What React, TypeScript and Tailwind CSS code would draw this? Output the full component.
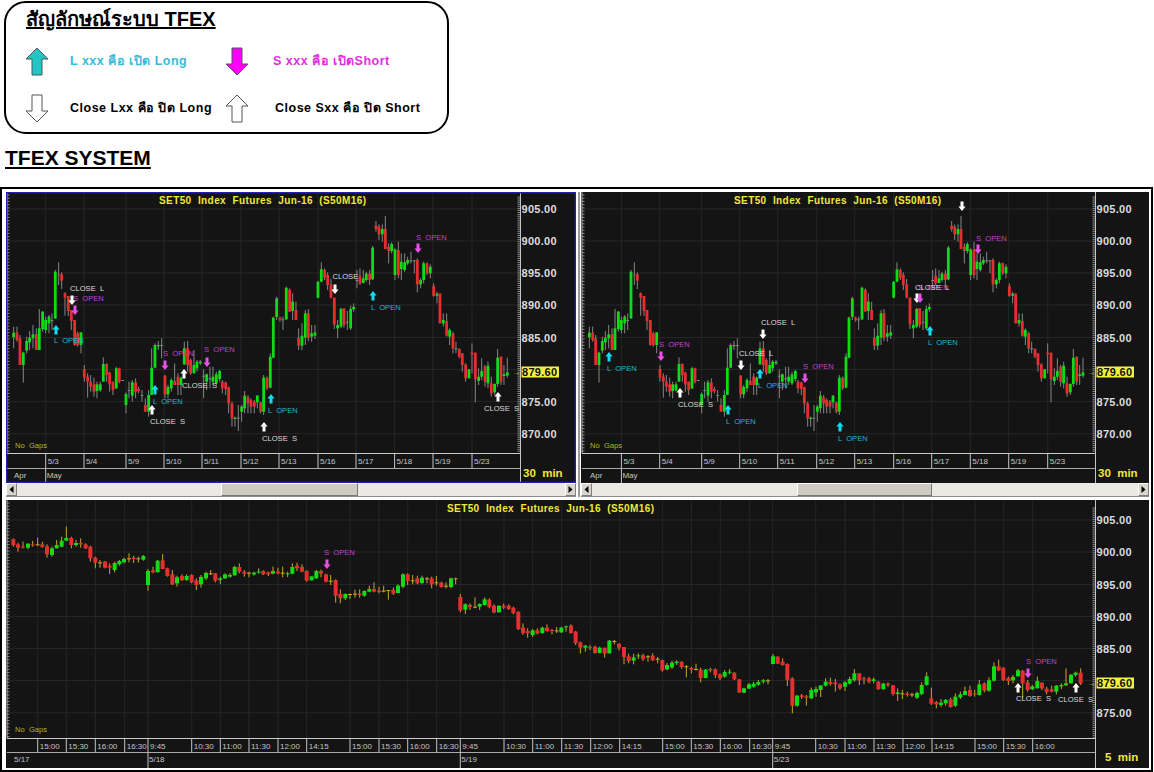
type Candle = { x: number; c: string; wt: number; bt: number; bb: number; wb: number };
type Mark = { x: number; y: number; dir: "up" | "down"; color: string };
type Note = { x: number; y: number; text: string; color: string };

// rows are "x colour wickTop bodyTop bodyBottom wickBottom", read off the picture at 3x
const parseRows = (src: string, x0: number, y0: number): Candle[] =>
  src
    .trim()
    .split(",")
    .map((r) => {
      const p = r.trim().split(" ");
      return {
        x: x0 + Number(p[0]) / 3,
        c: p[1],
        wt: y0 + Number(p[2]) / 3,
        bt: y0 + Number(p[3]) / 3,
        bb: y0 + Number(p[4]) / 3,
        wb: y0 + Number(p[5]) / 3,
      };
    });

const TOP_A = `28 g 425 443 457 490,38 r 425 443 465 470,47 r 450 460 540 540,57 g 500 503 540 593,67 g 455 468 497 505,
76 g 438 458 472 495,86 g 420 448 460 490,96 r 430 447 495 495,105 g 372 430 495 495,115 g 378 380 432 440,124 g 395 405 435 445,
134 g 390 395 415 445,143 n 385 405 408 435,153 g 255 260 400 402,163 r 232 268 271 300,172 r 262 268 287 312,182 r 322 325 338 392,
192 r 333 333 378 393,201 r 375 375 408 435,211 r 405 405 480 482,220 r 440 445 480 485,230 g 442 442 480 505,240 r 540 552 578 590,
250 r 565 575 590 638,259 r 570 590 605 620,269 r 578 598 620 635,278 g 590 598 618 640,288 g 590 598 616 620,297 g 517 537 590 590,
307 r 535 537 570 590,316 r 560 563 598 620,326 r 590 590 615 630,336 g 545 550 610 612,345 r 548 550 590 595,355 n 585 585 587 587,
365 g 622 627 660 685,374 n 590 615 618 640,384 g 585 592 632 650,394 r 580 592 620 640,403 r 605 612 618 625,413 n 615 630 633 650,
423 r 640 660 680 680,433 g 615 630 680 695,442 g 490 548 630 630,452 g 475 480 548 550,462 g 468 480 484 495,472 n 460 480 483 520,
482 r 570 572 628 640,491 g 600 606 628 640,501 g 580 585 610 620,511 r 535 588 600 600,521 r 565 575 600 630,530 g 575 578 600 630,
540 g 470 490 538 540,550 r 468 490 540 560,559 r 520 525 565 570,569 g 495 540 565 565,578 g 525 530 550 560,588 g 525 530 535 540,
598 n 553 572 575 640,607 g 565 568 590 615,617 n 545 580 583 610,626 g 545 575 590 600,636 g 560 568 595 600,646 g 555 558 582 590,
654 r 585 590 610 625,664 r 590 592 612 630,673 r 605 607 655 685,683 r 650 655 700 725,692 g 695 698 702 725,702 n 660 698 701 738,
712 g 660 665 680 710,721 g 618 632 670 685,731 r 630 637 655 685,740 r 640 645 665 685,750 r 645 650 665 685,759 g 630 632 652 670,
769 r 650 652 680 685,778 g 570 578 680 690,788 r 575 578 610 615,798 g 505 515 608 610,807 g 395 398 518 520,817 g 335 340 396 405,
827 r 395 398 404 410,836 n 395 403 406 435,846 g 305 308 403 405,856 r 310 314 380 380`;
const TOP_B = `10 g 325 350 378 405,20 r 350 375 405 405,28 r 430 458 482 495,38 g 415 452 482 495,48 g 375 385 458 480,57 r 372 385 458 468,
67 g 420 445 455 470,77 g 420 442 452 462,86 g 288 290 338 340,96 g 232 253 290 292,106 r 250 255 278 285,115 r 262 270 300 315,
125 r 282 298 338 340,135 r 338 338 418 432,145 g 405 420 430 460,155 g 368 372 425 430,164 r 370 370 420 428,174 n 378 410 413 435,
184 g 362 372 430 435,193 g 355 366 373 380,203 n 255 285 288 310,212 r 250 272 295 300,222 g 255 280 294 295,231 g 260 266 285 290,
241 r 255 266 285 300,250 g 183 188 283 285,260 r 108 122 132 140,269 r 118 125 148 165,279 g 118 132 148 170,288 r 93 132 192 188,
298 r 175 185 198 235,307 g 172 177 198 205,317 g 190 193 270 285,327 r 170 195 270 280,336 g 205 230 252 285,346 g 205 232 255 260,
355 g 215 225 235 240,365 n 200 226 229 235,375 n 225 226 228 265,384 r 220 225 298 322,394 g 280 285 298 310,403 g 230 235 285 295,
413 r 232 235 265 270,423 g 238 245 265 280,433 r 295 303 333 335,443 g 320 326 332 355,452 r 325 326 415 415,462 g 385 405 415 425,
472 r 385 408 452 455,481 g 430 435 455 480,491 r 440 445 490 505,500 n 470 490 493 505,510 r 490 492 515 520,519 r 505 505 540 560,
529 r 535 538 580 590,539 g 553 553 580 580,548 r 475 503 508 565,558 r 503 503 582 652,568 g 550 575 588 600,577 g 520 558 575 585,
587 r 540 545 590 605,596 g 530 542 595 610,606 r 575 595 625 635,616 g 595 597 622 630,625 g 492 518 597 605,635 r 515 515 590 600,
644 g 540 568 573 600,654 g 518 562 572 578`;

const BOT_A = `40 r 130 133 150 155,54 r 143 148 158 170,69 r 140 155 158 160,84 g 145 146 158 163,98 r 138 148 151 155,113 n 128 148 150 152,
127 r 140 148 156 158,141 r 148 154 178 188,156 g 155 160 180 185,170 g 135 150 160 160,185 g 125 137 155 157,199 g 95 129 137 138,
214 r 125 129 150 160,228 g 135 144 150 155,242 r 130 144 148 158,257 r 145 148 160 162,271 r 152 155 190 200,286 r 185 188 203 220,
300 n 195 202 205 218,315 r 198 200 218 220,329 r 205 212 218 237,344 g 200 204 225 232,358 g 195 198 208 212,372 g 188 192 202 205,
387 n 175 190 193 202,401 r 182 188 192 204,415 n 185 190 192 203,430 g 180 183 194 197,444 g 222 228 270 287,459 r 215 226 232 235,
473 g 195 197 232 232,488 r 177 196 222 222,502 r 218 220 243 245,517 r 225 238 268 270,531 g 242 247 265 275,546 r 238 243 255 258,
560 g 238 243 255 258,575 r 238 240 262 265,589 r 250 256 270 285,603 g 240 246 268 278,618 g 230 234 250 255,632 n 225 235 237 240,
646 r 234 235 257 262,661 g 245 250 255 268,675 g 235 238 250 252,690 g 234 240 245 248,704 g 212 216 241 242,718 r 205 216 230 235,
733 r 225 230 236 245,747 n 230 233 235 247,762 g 230 233 238 242,776 g 220 230 233 236,790 r 226 228 238 240,805 r 230 232 238 243,
819 g 215 228 236 238,834 r 218 230 235 238,848 n 215 233 235 247,863 g 230 235 238 246,877 g 205 216 236 238,891 r 203 212 220 228,
906 r 208 216 230 232,920 r 226 228 257 260,935 g 244 244 256 256,949 g 225 228 250 252,963 r 224 228 236 247,978 r 236 238 260 262,
992 n 240 257 259 270,1007 r 253 255 302 323,1021 r 283 297 310 325,1036 g 295 297 310 315,1050 n 296 297 299 312,1065 n 284 296 298 308,
1079 r 283 296 300 308,1093 g 286 288 302 305,1108 g 272 282 290 292,1122 r 262 282 290 292,1137 r 275 287 291 295,1151 n 272 287 289 292,
1165 n 285 285 288 314,1180 r 278 285 296 300,1194 g 268 272 294 295`;
const BOT_B = `9 g 235 238 275 280,23 r 235 238 258 270,38 n 240 256 258 268,52 r 242 250 265 268,66 g 242 248 264 268,81 n 246 250 252 265,
95 r 245 250 268 280,109 n 243 262 265 272,124 r 260 263 276 278,138 n 262 272 274 280,153 g 248 250 276 280,167 n 248 250 252 268,
181 r 297 306 346 352,196 g 325 328 344 357,210 r 325 330 336 345,225 n 307 335 338 340,239 g 325 327 335 345,254 g 307 313 330 332,
268 r 310 314 336 340,282 r 328 332 352 355,297 g 332 332 352 352,311 r 326 332 338 342,326 r 328 332 342 345,340 r 335 338 354 358,
355 r 350 350 402 405,369 r 385 398 414 420,383 r 400 408 415 428,398 g 402 406 420 426,412 r 400 406 416 418,427 g 395 398 414 416,
441 r 388 398 408 410,456 r 402 405 408 418,470 n 396 406 408 414,484 g 395 398 412 414,498 g 392 394 397 410,513 r 388 392 414 416,
527 r 408 410 444 450,541 r 440 442 458 476,556 g 450 452 458 470,570 r 450 456 458 465,585 r 452 455 474 476,599 g 455 458 474 475,
614 r 458 458 476 488,628 g 435 437 475 476,643 n 435 438 440 448,657 r 445 446 458 466,672 r 456 456 486 508,686 r 476 484 498 505,
701 g 476 487 497 508,715 g 475 481 484 492,729 r 476 481 492 498,744 n 480 484 487 500,758 r 475 482 496 498,773 n 486 491 494 505,
787 r 494 495 526 530,801 g 504 510 523 526,816 g 497 503 517 522,830 g 496 500 504 510,845 r 498 501 516 522,859 n 510 514 516 547,
874 r 515 519 524 535,888 n 506 522 524 526,902 r 518 524 549 562,917 g 522 524 549 550,931 r 518 522 526 532,946 r 520 523 540 549,
960 r 535 538 550 555,974 g 525 531 545 548,989 g 522 530 533 538,1003 r 532 533 553 555,1018 r 552 553 593 593,1032 g 578 580 593 595,
1047 g 564 568 581 582,1061 g 560 566 575 578,1075 g 555 561 569 572,1090 g 552 556 560 566,1104 n 552 556 558 568,1119 g 477 484 507 508,
1133 r 484 485 506 507,1148 r 490 500 510 512,1162 r 505 507 555 573,1177 r 547 550 632 655,1191 g 600 602 632 635`;
const BOT_C = `65 r 597 601 606 612,79 r 600 604 608 632,94 g 578 585 610 612,108 g 575 582 592 605,122 g 572 571 585 606,137 g 550 560 572 575,
151 r 548 561 567 572,166 r 552 562 568 590,180 r 565 568 580 585,195 g 558 562 575 588,209 g 545 552 566 568,223 g 522 535 556 560,
238 r 535 535 556 570,252 r 545 550 553 568,267 r 546 550 560 565,281 g 548 553 558 565,295 r 558 560 582 585,310 g 563 566 582 585,
324 r 562 566 570 576,339 r 570 571 597 602,353 g 580 592 597 618,367 n 585 595 597 612,382 r 590 596 600 605,396 n 593 598 600 606,
411 g 590 594 608 612,425 g 562 570 597 600,440 g 532 544 570 572,454 r 578 610 626 630,469 r 618 621 628 640,483 g 612 623 630 636,
497 g 612 615 625 632,512 r 608 613 636 638,526 g 595 605 632 636,541 g 590 598 607 612,555 g 575 588 600 600,570 r 572 585 603 605,
584 r 585 595 598 605,598 g 555 568 600 602,613 r 562 565 587 592,627 g 547 556 587 590,642 g 502 514 557 560,656 r 494 514 526 528,
670 r 517 518 555 558,685 r 545 549 558 570,699 g 540 546 556 565,714 g 522 526 544 545,728 r 525 527 565 608,743 r 555 562 585 590,
757 g 570 574 583 585,772 g 545 558 580 580,786 r 562 563 580 585,800 r 575 581 591 598,815 r 572 583 590 592,829 g 570 572 590 598,
844 g 565 570 574 582,858 g 520 565 571 572,873 g 538 539 565 566,887 g 530 533 540 545,902 r 520 533 566 570`;

const rightCandles = [...parseRows(TOP_A, 580, 185), ...parseRows(TOP_B, 865, 185)];
const leftCandles = rightCandles.map((c) => ({ ...c, x: c.x - 575.7 }));
const bottomCandles = [...parseRows(BOT_A, 0, 495), ...parseRows(BOT_B, 400, 495), ...parseRows(BOT_C, 780, 495)];

const CYAN = "#14dcf0";
const MAGENTA = "#e850e8";
const WHITE = "#ffffff";
const CY_TXT = "#20b8cc";
const MG_TXT = "#c040d0";
const WH_TXT = "#dcdcdc";

const dayLabels = ["5/3", "5/4", "5/9", "5/10", "5/11", "5/12", "5/13", "5/16", "5/17", "5/18", "5/19", "5/23"];
const dayTicks = [45.7, 84, 126, 164, 202, 241, 279, 318, 356, 394.6, 433, 472];

const bottomLabels: [number, string][] = [
  [37.7, "15:00"], [66.3, "15:30"], [95.3, "16:00"], [124.7, "16:30"], [148, "9:45"], [191.7, "10:30"], [220.3, "11:00"],
  [249, "11:30"], [278, "12:00"], [306.7, "14:15"], [350, "15:00"], [379, "15:30"], [407.7, "16:00"], [436.7, "16:30"],
  [460.3, "9:45"], [504, "10:30"], [532.7, "11:00"], [561.7, "11:30"], [590.7, "12:00"], [619.7, "14:15"], [662.7, "15:00"],
  [691.3, "15:30"], [720.3, "16:00"], [749.7, "16:30"], [772.7, "9:45"], [815.7, "10:30"], [845, "11:00"], [874, "11:30"],
  [903, "12:00"], [932, "14:15"], [975, "15:00"], [1003.7, "15:30"], [1032.7, "16:00"],
];

function Arrow({ x, y, dir, color }: Mark) {
  const s = dir === "up" ? 1 : -1;
  const pts = [
    [0, -5], [3.6, -0.6], [1.5, -0.6], [1.5, 4.5], [-1.5, 4.5], [-1.5, -0.6], [-3.6, -0.6],
  ]
    .map(([a, b]) => `${x + a},${y + b * s}`)
    .join(" ");
  return <polygon points={pts} fill={color} />;
}

type ChartProps = {
  ox: number;
  oy: number;
  w: number;
  h: number;
  axisX: number;
  line1: number;
  line2: number;
  rulerEnd: number;
  y905: number;
  prices: [number, string][];
  grid: number[];
  tagY: number;
  title: number;
  titleY: number;
  candles: Candle[];
  bodyW: number;
  wick: string;
  ticks: [number, string][];
  lower: [number, string, boolean][];
  marks: Mark[];
  notes: Note[];
  interval: string;
  intervalX: number;
  intervalY: number;
  gapsY: number;
  selected?: boolean;
};

function Chart(p: ChartProps) {
  const left = p.ox + 1;
  const rulerTicks: number[] = [];
  for (let y = p.y905 - 12; y < p.rulerEnd; y += 1.284 * 1.5) rulerTicks.push(y);
  const leftTicks: number[] = [];
  for (let y = p.oy + 3; y < p.line1; y += 3.2) leftTicks.push(y);
  return (
    <svg
      width={p.w}
      height={p.h}
      viewBox={`${p.ox} ${p.oy} ${p.w} ${p.h}`}
      className="block bg-[#141414]"
      fontFamily='"Liberation Sans", Arial, sans-serif'
    >
      {p.grid.map((y) => (
        <line key={y} x1={left} x2={p.axisX} y1={y} y2={y} stroke="#262626" />
      ))}
      {p.ticks.map(([x]) => (
        <line key={x} x1={x} x2={x} y1={p.oy} y2={p.line1} stroke="#262626" />
      ))}

      {p.candles.map((c, i) => {
        const color = c.c === "g" ? "#0fdc14" : c.c === "r" ? "#e62e2e" : p.wick;
        return (
          <g key={i}>
            <rect x={c.x - 0.5} y={c.wt} width={1} height={Math.max(c.wb - c.wt, 1)} fill={p.wick} />
            <rect x={c.x - p.bodyW / 2} y={c.bt} width={p.bodyW} height={Math.max(c.bb - c.bt, 1)} fill={color} />
          </g>
        );
      })}

      {p.notes.map((n, i) => (
        <text key={i} x={n.x} y={n.y} fontSize={7.6} fill={n.color} className="whitespace-pre">
          {n.text}
        </text>
      ))}
      {p.marks.map((m, i) => (
        <Arrow key={i} {...m} />
      ))}

      <text x={p.title} y={p.titleY} fontSize={10} fontWeight="bold" fill="#f0e838" textLength={207} className="whitespace-pre">
        {"SET50  Index  Futures  Jun-16  (S50M16)"}
      </text>
      <text x={p.ox + 9} y={p.gapsY} fontSize={7.6} fill="#b4b41e" className="whitespace-pre">
        {"No  Gaps"}
      </text>

      {leftTicks.map((y) => (
        <line key={y} x1={left} x2={left + 2.5} y1={y} y2={y} stroke="#a8a8a8" strokeWidth={0.8} />
      ))}
      <line x1={left} x2={left} y1={p.oy} y2={p.line1} stroke="#b8b8b8" />
      <line x1={left} x2={p.axisX} y1={p.line1 + 0.5} y2={p.line1 + 0.5} stroke="#cccccc" />
      <line x1={left} x2={p.axisX} y1={p.line2 + 0.5} y2={p.line2 + 0.5} stroke="#a8a8a8" />
      {p.ticks.map(([x, t]) => (
        <g key={x + t}>
          <line x1={x} x2={x} y1={p.line1} y2={p.line2} stroke="#c4c4c4" />
          <text x={x + 2} y={p.line1 + 11} fontSize={8} fill="#c4c4c4">
            {t}
          </text>
        </g>
      ))}
      {p.lower.map(([x, t, mark]) => (
        <g key={t}>
          {mark && <line x1={x} x2={x} y1={p.line2} y2={p.oy + p.h} stroke="#c4c4c4" />}
          <text x={mark ? x + 1 : x} y={p.line2 + 10} fontSize={8} fill="#c4c4c4">
            {t}
          </text>
        </g>
      ))}

      {rulerTicks.map((y) => (
        <line key={y} x1={p.axisX - 2.5} x2={p.axisX} y1={y} y2={y} stroke="#a8a8a8" strokeWidth={0.8} />
      ))}
      <line x1={p.axisX + 0.5} x2={p.axisX + 0.5} y1={p.oy} y2={p.oy + p.h} stroke="#c4c4c4" />
      {p.prices.map(([y, t]) => (
        <text key={t} x={p.axisX + 1.5} y={y + 4} fontSize={11} fontWeight="bold" fill="#dcdcdc" textLength={35}>
          {t}
        </text>
      ))}

      <text x={p.axisX - 8} y={p.tagY + 3} fontSize={8} fontWeight="bold" fill="#c8b820">
        →
      </text>
      <rect x={p.axisX + 1.5} y={p.tagY - 5.5} width={37.5} height={11} fill="#f4f040" />
      <text x={p.axisX + 2} y={p.tagY + 4} fontSize={11} fontWeight="bold" fill="#111111" textLength={35}>
        879.60
      </text>
      <text x={p.intervalX} y={p.intervalY} fontSize={11.5} fontWeight="bold" fill="#f0e838" className="whitespace-pre">
        {p.interval}
      </text>
      {p.selected && (
        <rect x={p.ox + 0.5} y={p.oy + 0.5} width={p.w - 1} height={p.h - 1} fill="none" stroke="#2222a8" strokeWidth={1.6} />
      )}
    </svg>
  );
}

function ScrollButton({ dir }: { dir: "left" | "right" }) {
  return (
    <div className="flex h-full w-[11px] shrink-0 items-center justify-center border-t border-l border-t-white border-l-white border-r border-b border-r-[#808080] border-b-[#808080] bg-[#d8d5cc]">
      <svg width="5" height="7" viewBox="0 0 5 7">
        <polygon points={dir === "left" ? "4.5,0 4.5,7 0.5,3.5" : "0.5,0 0.5,7 4.5,3.5"} fill="#000" />
      </svg>
    </div>
  );
}

function ScrollBar({ before, thumb }: { before: number; thumb: number }) {
  return (
    <div className="flex h-[14px] items-stretch border-b border-b-[#8c8c8c] bg-[#ebe9e3]">
      <ScrollButton dir="left" />
      <div className="shrink-0" style={{ width: before }} />
      <div className="shrink-0 border-t border-l border-t-white border-l-white border-r border-b border-r-[#777777] border-b-[#777777] bg-[#cdcbc2]" style={{ width: thumb }} />
      <div className="flex-1" />
      <ScrollButton dir="right" />
    </div>
  );
}

function LegendArrow({ dir, fill }: { dir: "up" | "down"; fill: string }) {
  return (
    <svg width="24" height="29" viewBox="0 0 24 29">
      <polygon
        points={dir === "up" ? "12,1 23,12 17,12 17,28 7,28 7,12 1,12" : "7,1 17,1 17,17 23,17 12,28 1,17 7,17"}
        fill={fill}
        stroke="#555"
        strokeWidth="1"
      />
    </svg>
  );
}

const topGrid = [209, 241, 273, 305, 337.5, 369.5, 401.6, 433.7];
const topPrices = (): [number, string][] => [
  [209, "905.00"], [241, "900.00"], [273, "895.00"], [305, "890.00"], [337.5, "885.00"], [401.6, "875.00"], [433.7, "870.00"],
];

const leftMarks: Mark[] = [
  { x: 72, y: 300, dir: "down", color: WHITE }, { x: 75, y: 310, dir: "down", color: MAGENTA }, { x: 56, y: 330, dir: "up", color: CYAN },
  { x: 165, y: 365, dir: "down", color: MAGENTA }, { x: 207, y: 362, dir: "down", color: MAGENTA }, { x: 184, y: 374, dir: "up", color: WHITE },
  { x: 155, y: 390, dir: "up", color: CYAN }, { x: 152, y: 410, dir: "up", color: WHITE }, { x: 271, y: 399, dir: "up", color: CYAN },
  { x: 264, y: 427, dir: "up", color: WHITE }, { x: 335, y: 289, dir: "down", color: WHITE }, { x: 373, y: 296, dir: "up", color: CYAN },
  { x: 418, y: 248, dir: "down", color: MAGENTA }, { x: 498, y: 397, dir: "up", color: WHITE },
];
const leftNotes: Note[] = [
  { x: 70, y: 290.5, text: "CLOSE  L", color: WH_TXT }, { x: 73, y: 301, text: "S  OPEN", color: MG_TXT }, { x: 54, y: 343, text: "L  OPEN", color: CY_TXT },
  { x: 163, y: 355.5, text: "S  OPEN", color: MG_TXT }, { x: 204, y: 352, text: "S  OPEN", color: MG_TXT }, { x: 182, y: 387.5, text: "CLOSE  S", color: WH_TXT },
  { x: 153, y: 403.5, text: "L  OPEN", color: CY_TXT }, { x: 150, y: 423.5, text: "CLOSE  S", color: WH_TXT }, { x: 268, y: 412.5, text: "L  OPEN", color: CY_TXT },
  { x: 262, y: 441, text: "CLOSE  S", color: WH_TXT }, { x: 332.5, y: 279, text: "CLOSE", color: WH_TXT }, { x: 371, y: 309.5, text: "L  OPEN", color: CY_TXT },
  { x: 416, y: 239.5, text: "S  OPEN", color: MG_TXT }, { x: 484, y: 410.5, text: "CLOSE  S", color: WH_TXT },
];

const rightMarks: Mark[] = [
  { x: 609, y: 357, dir: "up", color: CYAN }, { x: 661, y: 356, dir: "down", color: MAGENTA }, { x: 680, y: 393, dir: "up", color: WHITE },
  { x: 763, y: 334, dir: "down", color: WHITE }, { x: 741, y: 365, dir: "down", color: WHITE }, { x: 760, y: 374, dir: "up", color: CYAN },
  { x: 728, y: 410, dir: "up", color: CYAN }, { x: 805, y: 378, dir: "down", color: MAGENTA }, { x: 840, y: 427, dir: "up", color: CYAN },
  { x: 962, y: 206, dir: "down", color: WHITE }, { x: 978, y: 249, dir: "down", color: MAGENTA }, { x: 917, y: 298, dir: "down", color: WHITE },
  { x: 920, y: 298, dir: "down", color: MAGENTA }, { x: 930, y: 331, dir: "up", color: CYAN },
];
const rightNotes: Note[] = [
  { x: 607, y: 370.5, text: "L  OPEN", color: CY_TXT }, { x: 659, y: 346.5, text: "S  OPEN", color: MG_TXT }, { x: 678, y: 406.5, text: "CLOSE  S", color: WH_TXT },
  { x: 761, y: 324.5, text: "CLOSE  L", color: WH_TXT }, { x: 739, y: 355.5, text: "CLOSE  L", color: WH_TXT }, { x: 758, y: 387.5, text: "L  OPEN", color: CY_TXT },
  { x: 726, y: 423.5, text: "L  OPEN", color: CY_TXT }, { x: 803, y: 368.5, text: "S  OPEN", color: MG_TXT }, { x: 838, y: 441, text: "L  OPEN", color: CY_TXT },
  { x: 976, y: 240.5, text: "S  OPEN", color: MG_TXT }, { x: 918, y: 289.5, text: "S  OPEN", color: MG_TXT }, { x: 915, y: 289.5, text: "CLOSE  L", color: WH_TXT },
  { x: 928, y: 344.5, text: "L  OPEN", color: CY_TXT },
];

const bottomMarks: Mark[] = [
  { x: 327, y: 564, dir: "down", color: MAGENTA }, { x: 1028, y: 673, dir: "down", color: MAGENTA },
  { x: 1018, y: 688, dir: "up", color: WHITE }, { x: 1076, y: 688, dir: "up", color: WHITE },
];
const bottomNotes: Note[] = [
  { x: 324, y: 555, text: "S  OPEN", color: MG_TXT }, { x: 1026, y: 663.5, text: "S  OPEN", color: MG_TXT },
  { x: 1016, y: 701, text: "CLOSE  S", color: WH_TXT }, { x: 1058, y: 702, text: "CLOSE  S", color: WH_TXT },
];

export default function App() {
  const leftTicks = dayTicks.map((x, i): [number, string] => [x, dayLabels[i]]);
  const rightTicks = dayTicks.map((x, i): [number, string] => [x + 575.7, dayLabels[i]]);
  return (
    <div className="h-[772px] w-[1154px] overflow-hidden bg-white font-['Liberation_Sans','Noto_Sans',Arial,sans-serif] text-black">
      <div className="mt-px ml-[4px] h-[133px] w-[445px] rounded-[22px] border-2 border-black">
        <h1 className="mt-[5px] ml-[20px] text-[20px] leading-[22px] font-bold underline">สัญลักษณ์ระบบ TFEX</h1>
        <div className="mt-[17px] ml-[19px] grid grid-cols-[45px_155px_48px_1fr] items-center gap-y-[18px] text-[12.5px] font-bold tracking-[0.5px]">
          <LegendArrow dir="up" fill="#22c4c4" />
          <span className="text-[#35bcd8]">L xxx คือ เปิด Long</span>
          <LegendArrow dir="down" fill="#ff00ff" />
          <span className="text-[#e02ee0]">S xxx คือ เปิดShort</span>
          <LegendArrow dir="down" fill="#ffffff" />
          <span>Close Lxx คือ ปิด Long</span>
          <LegendArrow dir="up" fill="#ffffff" />
          <span className="ml-[2px]">Close Sxx คือ ปิด Short</span>
        </div>
      </div>

      <h2 className="mt-[11px] ml-[5px] h-[31px] text-[21px] leading-[26px] font-bold underline">TFEX SYSTEM</h2>

      <div className="mt-[11px] flex h-[585px] w-[1153px] flex-col border-2 border-black pt-[3px] pr-[2px] pb-[2px] pl-[4px]">
        <div className="flex">
          <div className="w-[570px]">
            <Chart
              ox={6}
              oy={192}
              w={570}
              h={291}
              axisX={520}
              line1={453}
              line2={468}
              rulerEnd={453}
              y905={209}
              prices={topPrices()}
              grid={topGrid}
              tagY={372}
              title={159}
              titleY={203.5}
              candles={leftCandles}
              bodyW={2.8}
              wick="#858585"
              ticks={leftTicks}
              lower={[[14, "Apr", false], [45.7, "May", true]]}
              marks={leftMarks}
              notes={leftNotes}
              interval="30  min"
              intervalX={523}
              intervalY={476.5}
              gapsY={448}
              selected
            />
            <ScrollBar before={204} thumb={137} />
          </div>
          <div className="flex w-[5px] justify-center">
            <div className="w-[2px] bg-[#9a9a9a]" />
          </div>
          <div className="w-[568px]">
            <Chart
              ox={581}
              oy={192}
              w={568}
              h={291}
              axisX={1095}
              line1={453}
              line2={468}
              rulerEnd={453}
              y905={209}
              prices={topPrices()}
              grid={topGrid}
              tagY={372}
              title={734}
              titleY={203.5}
              candles={rightCandles}
              bodyW={2.8}
              wick="#858585"
              ticks={rightTicks}
              lower={[[590, "Apr", false], [621.4, "May", true]]}
              marks={rightMarks}
              notes={rightNotes}
              interval="30  min"
              intervalX={1098}
              intervalY={476.5}
              gapsY={448}
            />
            <ScrollBar before={205} thumb={135} />
          </div>
        </div>
        <div className="mt-[3px]">
          <Chart
            ox={6}
            oy={500}
            w={1143}
            h={268}
            axisX={1095}
            line1={738}
            line2={752}
            rulerEnd={738}
            y905={520}
            prices={[[520, "905.00"], [552, "900.00"], [584.5, "895.00"], [616.5, "890.00"], [648.5, "885.00"], [712.7, "875.00"]]}
            grid={[520, 552, 584.5, 616.5, 648.5, 680.5, 712.7]}
            tagY={683}
            title={447}
            titleY={512}
            candles={bottomCandles}
            bodyW={4}
            wick="#c8a62c"
            ticks={bottomLabels}
            lower={[[14, "5/17", false], [148, "5/18", true], [460.3, "5/19", true], [772.7, "5/23", true]]}
            marks={bottomMarks}
            notes={bottomNotes}
            interval="5  min"
            intervalX={1105}
            intervalY={761}
            gapsY={732}
          />
        </div>
      </div>
    </div>
  );
}
